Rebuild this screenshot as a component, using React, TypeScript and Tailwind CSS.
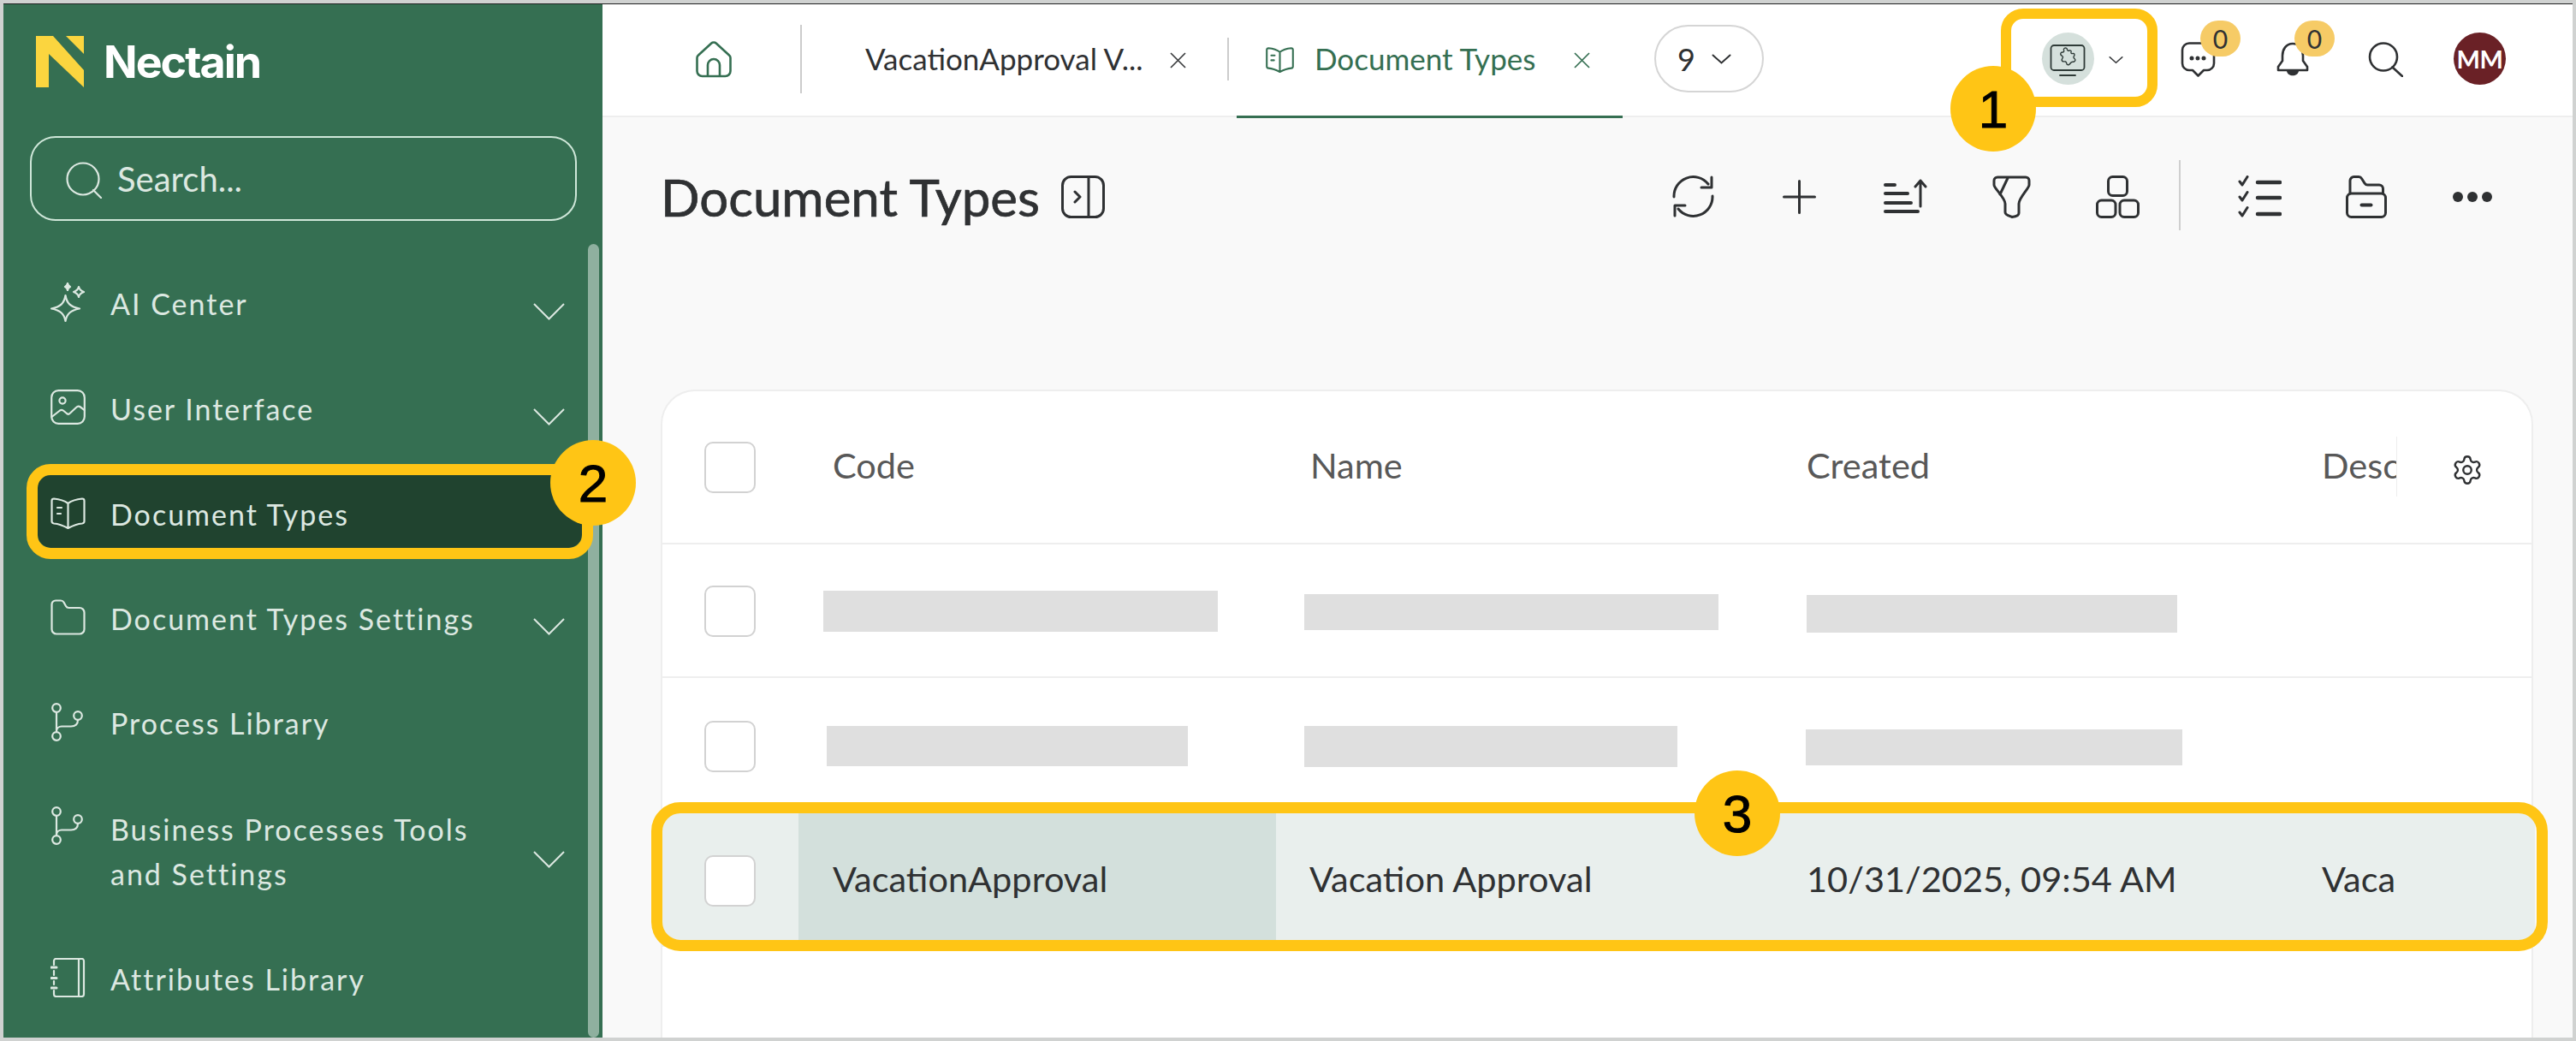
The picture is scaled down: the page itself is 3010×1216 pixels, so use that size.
import React from "react";
import { Settings } from "lucide-react";

const side = { fill: "none", stroke: "currentColor", strokeWidth: 2.2, strokeLinecap: "round", strokeLinejoin: "round" } as const;
const dark = { fill: "none", stroke: "currentColor", strokeWidth: 3, strokeLinecap: "round", strokeLinejoin: "round" } as const;

const Sparkle = () => (
  <svg width="41" height="46" viewBox="0 0 41 46" {...side}>
    <path d="M17.5 15C19 24 23 28.5 34 30.5C23 32.5 19 37 17.5 45C16 37 12 32.5 1 30.5C12 28.5 16 24 17.5 15Z" />
    <path d="M33 5C33.5 8 35 9.5 39 11C35 12.5 33.5 14 33 17C32.5 14 31 12.5 27 11C31 9.5 32.5 8 33 5Z" />
    <path d="M20 1C20.3 3 21 4 23 5C21 6 20.3 7 20 9C19.7 7 19 6 17 5C19 4 19.7 3 20 1Z" fill="currentColor" />
  </svg>
);
const ImageIcon = () => (
  <svg width="41" height="41" viewBox="0 0 41 41" {...side}>
    <rect x="1.2" y="1.2" width="38.6" height="38.6" rx="8" />
    <circle cx="14" cy="13" r="3.6" />
    <path d="M1.5 32L11 24.5C12.5 23.5 14 23.5 15.5 25L19 28C20.5 29 22 29 23 27.5L30 21C31.5 19.5 33 19 35 20.5L39.5 24" />
  </svg>
);
const Book = ({ w = 41, h = 37, sw = 2.2 }: { w?: number; h?: number; sw?: number }) => (
  <svg width={w} height={h} viewBox="0 0 41 37" {...side} strokeWidth={sw}>
    <path d="M20.5 7C15 3 9 2 4 1.5Q1.5 1.5 1.5 4V28Q1.5 30 4 30.5C10 31 15 33 20.5 36C26 33 31 31 37 30.5Q39.5 30 39.5 28V4Q39.5 1.5 37 1.5C32 2 26 3 20.5 7ZM20.5 7V36" />
    <path d="M8 12H13M8 19H12" />
  </svg>
);
const Folder = () => (
  <svg width="41" height="42" viewBox="0 0 41 42" {...side}>
    <path d="M6 1.5H12A4 4 0 0 1 15.5 3.5L18 8A4 4 0 0 0 21.5 10H34A5.5 5.5 0 0 1 39.5 15.5V35A5.5 5.5 0 0 1 34 40.5H7A5.5 5.5 0 0 1 1.5 35V6A4.5 4.5 0 0 1 6 1.5Z" />
  </svg>
);
const Branch = () => (
  <svg width="41" height="45" viewBox="0 0 41 45" {...side}>
    <circle cx="7" cy="6" r="4.8" />
    <circle cx="7" cy="39" r="4.8" />
    <circle cx="32" cy="15" r="4.8" />
    <path d="M7 11V34M32 20C32 25 29 27.5 24 27.5H13A6 6 0 0 0 7 33" />
  </svg>
);
const Notebook = () => (
  <svg width="41" height="46" viewBox="0 0 41 46" {...side}>
    <path d="M4 8V3.5A2.5 2.5 0 0 1 6.5 1H36.5A2.5 2.5 0 0 1 39 3.5V42.5A2.5 2.5 0 0 1 36.5 45H6.5A2.5 2.5 0 0 1 4 42.5V38" />
    <path d="M33 1V45M4 15V20M4 27V31" />
    <path d="M1 11H7M1 23.5H7M1 35H7" strokeWidth={3} />
  </svg>
);
const SideChevron = () => (
  <svg width="37" height="20" viewBox="0 0 37 20" fill="none" stroke="currentColor" strokeWidth="2">
    <path d="M1 1L18.5 18.5L36 1" />
  </svg>
);
const Close = ({ cls }: { cls: string }) => (
  <svg width="19" height="19" viewBox="0 0 19 19" fill="none" stroke="currentColor" strokeWidth="1.7" className={cls}>
    <path d="M1 1L18 18M18 1L1 18" />
  </svg>
);
const SmallChevron = ({ w, h, cls }: { w: number; h: number; cls: string }) => (
  <svg width={w} height={h} viewBox="0 0 23 12" fill="none" stroke="currentColor" strokeWidth="2" strokeLinecap="round" className={cls}>
    <path d="M1.5 1.5L11.5 10.5L21.5 1.5" />
  </svg>
);

const NavRow = ({ icon, label, chevron, active, tall }: { icon: React.ReactNode; label: React.ReactNode; chevron?: boolean; active?: boolean; tall?: boolean }) => (
  <div className={tall ? "h-[176px] flex items-center" : "h-[122.5px] flex items-center"}>
    <div
      className={
        active
          ? "ml-[40px] w-[636px] h-[86px] -mt-[6px] pt-[8px] pl-[15px] pr-[20px] flex items-center rounded-[16px] bg-[#20432f]"
          : "ml-[40px] w-[636px] pl-[15px] pr-[20px] flex items-center"
      }
    >
      <div className={tall ? "w-[41px] shrink-0 self-start -mt-[1px]" : "w-[41px] shrink-0 -mt-[4px]"}>{icon}</div>
      <div className="ml-[29px] text-[34px] leading-[52px] tracking-[2px]">{label}</div>
      {chevron && (
        <div className="ml-auto mt-[18px]">
          <SideChevron />
        </div>
      )}
    </div>
  </div>
);

const Checkbox = () => <div className="w-[60px] h-[60px] ml-[49px] mt-[1px] rounded-[10px] border-2 border-[#d2d2d2] bg-white" />;

const Yellow = ({ cls }: { cls: string }) => <div className={"absolute border-[#ffc515] " + cls} />;
const Num = ({ n, cls }: { n: string; cls: string }) => (
  <div className={"absolute w-[100px] h-[100px] rounded-full bg-[#ffc515] flex items-center justify-center text-black text-[62px] [-webkit-text-stroke:1px_black] [font-family:'Liberation_Sans',sans-serif] " + cls}>{n}</div>
);
const Zero = ({ cls }: { cls: string }) => (
  <div className={"absolute w-[47px] h-[42px] rounded-full bg-[#f6cb66] flex items-center justify-center text-[#2f3133] text-[30px] " + cls}>0</div>
);

export default function App() {
  const gridCls = "grid grid-cols-[159px_558px_582px_602px_125px_158px]";
  return (
    <div className="relative w-[3010px] h-[1216px] overflow-hidden bg-[#d0d2d1] pt-[4px] px-[4px] pb-[4px] [font-family:Lato,sans-serif]">
      <div className="flex h-full border-t border-[#222]">
        <aside className="relative w-[700px] shrink-0 overflow-hidden bg-[#356f52] text-[#dce8e1]">
          <div className="flex pl-[38px] pt-[37px] h-[97px]">
            <svg width="56" height="60" viewBox="0 0 56 60" fill="#fbd53f">
              <path d="M0 0H20L56 40V60L15 21V60H0Z" />
              <path d="M35 0H56V21Z" />
            </svg>
            <span className="ml-[23px] mt-[1px] text-white text-[52px] leading-[60px] font-bold tracking-[-2px] [font-family:Inter,sans-serif]">Nectain</span>
          </div>
          <div className="ml-[31px] mt-[57px] w-[639px] h-[99px] rounded-[30px] border-2 border-[#cfe7d9] flex items-center pl-[40px]">
            <svg width="43" height="43" viewBox="0 0 43 43" {...side} className="mt-[3px]">
              <circle cx="20" cy="20" r="18.5" />
              <path d="M32 33L41 42" />
            </svg>
            <span className="ml-[17px] text-[40px] leading-none">Search...</span>
          </div>
          <nav className="mt-[36px]">
            <NavRow icon={<Sparkle />} label="AI Center" chevron />
            <NavRow icon={<ImageIcon />} label="User Interface" chevron />
            <NavRow icon={<Book />} label="Document Types" active />
            <NavRow icon={<Folder />} label="Document Types Settings" chevron />
            <NavRow icon={<Branch />} label="Process Library" />
            <NavRow
              tall
              icon={<Branch />}
              label={
                <>
                  Business Processes Tools
                  <br />
                  and Settings
                </>
              }
              chevron
            />
            <NavRow icon={<Notebook />} label="Attributes Library" />
          </nav>
          <div className="absolute left-[683px] top-[280px] bottom-0 w-[13px] rounded-full bg-[#8fb09f]" />
        </aside>

        <main className="flex-1 flex flex-col min-w-0 bg-[#f9f9f9]">
          <header className="h-[132px] shrink-0 bg-white border-b-2 border-[#eeeeee] flex items-stretch text-[#2f3133]">
            <div className="w-[231px] pl-[109px] flex items-center text-[#356f52]">
              <svg width="42" height="43" viewBox="0 0 42 43" fill="none" stroke="currentColor" strokeWidth="2.6" strokeLinejoin="round" className="-mt-[2px]">
                <path d="M1.5 19.5A4 4 0 0 1 3 16.5L18 2.7A4.5 4.5 0 0 1 24 2.7L39 16.5A4 4 0 0 1 40.5 19.5V35A6 6 0 0 1 34.5 41H7.5A6 6 0 0 1 1.5 35Z" />
                <path d="M14 41V28A7 7 0 0 1 28 28V41" />
              </svg>
            </div>
            <div className="self-center w-[2px] h-[80px] -mt-[2px] bg-[#cccccc]" />
            <div className="flex items-center pl-[74px] w-[497px]">
              <span className="-mt-[3px] text-[35px] leading-none whitespace-nowrap">VacationApproval V...</span>
              <Close cls="ml-[31px] shrink-0 text-[#3b3d3f]" />
            </div>
            <div className="self-center w-[2px] h-[50px] -mt-[2px] bg-[#cccccc]" />
            <div className="ml-[9px] w-[451px] h-[133px] flex items-center pl-[34px] border-b-[3px] border-[#356f52] text-[#356f52]">
              <Book w={33} h={30} sw={2.6} />
              <span className="-mt-[3px] ml-[24px] text-[35px] leading-none whitespace-nowrap">Document Types</span>
              <Close cls="ml-[45px] shrink-0" />
            </div>
            <div className="ml-[37px] self-center -mt-[3px] w-[128px] h-[79px] rounded-full border-2 border-[#d5d5d5] flex items-center pl-[25px]">
              <span className="text-[36px] leading-none">9</span>
              <SmallChevron w={23} h={12} cls="ml-[19px]" />
            </div>
            <div className="ml-[325px] self-center w-[61px] h-[61px] -mt-[3px] rounded-full bg-[#d5e0dc] text-[#2f3b38]">
              <svg width="61" height="61" viewBox="0 0 61 61" fill="none" stroke="currentColor" strokeWidth="1.8" strokeLinecap="round" strokeLinejoin="round">
                <rect x="10.5" y="15" width="39" height="29" rx="3.5" />
                <path d="M21 50H39" />
                <path strokeWidth="1.4" d="M26 18.5C27.5 17.5 29.5 18 29.5 20C29.5 21 31 21.5 32 21C33.5 20.5 34.5 21.5 34 23C33.5 24 34.5 25 36 24.5C38 24 38.5 26 37.5 27.5C36.5 28.5 37 30 38 30.5C39.5 31.5 39 33.5 37.5 34C36 34.5 34.5 34 33.5 35.5C32.5 37 31 38.5 29.5 37.5C28.5 36.5 29 34.5 27.5 34C26 33.5 24.5 34.5 23.5 33C22.5 31.5 24 30 24.5 29C25 27.5 23 27.5 22 26C21 24.5 22.5 23 24 23C25.5 23 26 22 25.5 20.5C25.2 19.5 25.2 19 26 18.5Z" />
              </svg>
            </div>
            <SmallChevron w={17} h={10} cls="self-center ml-[17px] -mt-[1px] text-[#3b3d3f]" />
            <div className="relative self-center ml-[67px] w-[41px] h-[41px] -mt-[1px]">
              <svg width="41" height="41" viewBox="0 0 41 41" fill="none" stroke="currentColor" strokeWidth="2.6" strokeLinejoin="round">
                <path d="M10 1.5H31A8 8 0 0 1 39 9.5V25A8 8 0 0 1 31 33H27L20.5 39.5L14 33H10A8 8 0 0 1 2 25V9.5A8 8 0 0 1 10 1.5Z" />
                <circle cx="13" cy="19" r="1.2" fill="currentColor" />
                <circle cx="20" cy="19" r="1.2" fill="currentColor" />
                <circle cx="27" cy="19" r="1.2" fill="currentColor" />
              </svg>
              <Zero cls="left-[23px] -top-[25px]" />
            </div>
            <div className="relative self-center ml-[71px] w-[38px] h-[41px] -mt-[1px]">
              <svg width="38" height="41" viewBox="0 0 38 41" fill="none" stroke="currentColor" strokeWidth="2.6" strokeLinejoin="round">
                <path d="M19 2C11 2 7 9 7 16V22L2 29V33H36V29L31 22V16C31 9 27 2 19 2Z" />
                <path d="M12 34H26C25 41 13 41 12 34Z" fill="currentColor" stroke="none" />
              </svg>
              <Zero cls="left-[21px] -top-[25px]" />
            </div>
            <div className="self-center ml-[69px] -mt-[1px]">
              <svg width="41" height="41" viewBox="0 0 41 41" fill="none" stroke="currentColor" strokeWidth="2.6" strokeLinecap="round">
                <circle cx="18" cy="17.5" r="16" />
                <path d="M28.5 29.5L40 40" />
              </svg>
            </div>
            <div className="self-center ml-[59px] -mt-[3px] w-[61px] h-[61px] rounded-full bg-[#6a2126] text-white text-[29px] font-bold tracking-[-0.5px] flex items-center justify-center">MM</div>
          </header>

          <div className="mt-[50px] h-[82px] shrink-0 flex items-center pl-[68px] pt-[3px] text-[#2f3133]">
            <h1 className="text-[60px] leading-none font-normal whitespace-nowrap [-webkit-text-stroke:0.7px_#2f3133]">Document Types</h1>
            <svg width="51" height="50" viewBox="0 0 51 50" {...dark} className="ml-[25px]">
              <rect x="1.5" y="1.5" width="48" height="47" rx="10" />
              <path d="M32 1.5V48.5M16 19L22 25L16 31" />
            </svg>
            <svg width="51" height="51" viewBox="0 0 51 51" {...dark} className="ml-[662px]">
              <path d="M3 26A22.5 22.5 0 0 1 43 11" />
              <path d="M47 3V15H35" />
              <path d="M48 25A22.5 22.5 0 0 1 8 40" />
              <path d="M4 48V36H16" />
            </svg>
            <svg width="39" height="40" viewBox="0 0 39 40" {...dark} className="ml-[79px]">
              <path d="M19.5 1.5V38.5M1.5 20H37.5" />
            </svg>
            <svg width="51" height="41" viewBox="0 0 51 41" {...dark} className="ml-[79px]">
              <path d="M2 7H13M2 17H28M2 28H32M2 38H40" strokeWidth={4} />
              <path d="M43 32V2M37 9L43 2L49 9" />
            </svg>
            <svg width="45" height="50" viewBox="0 0 45 50" {...dark} className="ml-[76px]">
              <path d="M6 2H39A4 4 0 0 1 43 6V11C43 15 31 26 31 33V44C31 47 27 48 23 48.5C19 47 15 46 15 43V33C15 26 2 15 2 11V6A4 4 0 0 1 6 2Z" />
              <path d="M18 3L9 22" />
            </svg>
            <svg width="51" height="50" viewBox="0 0 51 50" {...dark} className="ml-[76px]">
              <rect x="14.5" y="1.5" width="22" height="22" rx="5" />
              <rect x="1.5" y="29" width="21.5" height="19.5" rx="5" />
              <rect x="28" y="29" width="21.5" height="19.5" rx="5" />
            </svg>
            <div className="ml-[46px] -mt-[3px] w-[2px] h-[82px] bg-[#cfcfcf]" />
            <svg width="51" height="50" viewBox="0 0 51 50" {...dark} className="ml-[67px]">
              <path d="M2 7L5 11L11 1.5M2 25L5 29L11 19.5M2 43L5 47L11 37.5" />
              <path d="M23 8H49M23 26H49M23 45H49" strokeWidth={4.5} />
            </svg>
            <svg width="48" height="50" viewBox="0 0 48 50" {...dark} className="ml-[75px]">
              <path d="M5 21V6A4.5 4.5 0 0 1 9.5 1.5H15A4 4 0 0 1 18.5 3.5L22 9A4 4 0 0 0 25.5 11H39A4.5 4.5 0 0 1 43.5 15.5V21" />
              <rect x="1.5" y="21" width="45" height="27.5" rx="5" />
              <path d="M18.5 34.5H29.5" strokeWidth={4} />
            </svg>
            <svg width="46" height="14" viewBox="0 0 46 14" fill="currentColor" className="ml-[77px]">
              <circle cx="6" cy="7" r="6" />
              <circle cx="23" cy="7" r="6" />
              <circle cx="40" cy="7" r="6" />
            </svg>
          </div>

          <section className="ml-[68px] mt-[186px] w-[2188px] flex-1 rounded-t-[40px] border-x-2 border-t-2 border-[#eeeeee] bg-white text-[#2f3133]">
            <div className={gridCls + " h-[179px] border-b-2 border-[#eeeeee] text-[#585858]"}>
              <div className="flex items-center"><Checkbox /></div>
              <div className="flex items-center pl-[40px] pb-[4px] text-[41.5px]">Code</div>
              <div className="flex items-center pl-[40px] pb-[4px] text-[41.5px]">Name</div>
              <div className="flex items-center pl-[38px] pb-[4px] text-[41.5px]">Created</div>
              <div className="flex items-center pl-[38px] pb-[4px] text-[41.5px] overflow-hidden whitespace-nowrap">Description</div>
              <div className="relative flex items-center pl-[64px]">
                <div className="absolute left-0 top-[53px] h-[70px] w-px bg-[#eeeeee]" />
                <Settings size={38} strokeWidth={1.5} className="mt-[6px] text-[#2f3133]" />
              </div>
            </div>
            <div className={gridCls + " h-[156px] border-b-2 border-[#eeeeee]"}>
              <div className="flex items-center"><Checkbox /></div>
              <div className="flex items-center"><div className="ml-[29px] mt-[2px] w-[461px] h-[48px] bg-[#dfdfdf]" /></div>
              <div className="flex items-center"><div className="ml-[33px] mt-[4px] w-[484px] h-[42px] bg-[#dfdfdf]" /></div>
              <div className="flex items-center"><div className="ml-[38px] mt-[8px] w-[433px] h-[44px] bg-[#dfdfdf]" /></div>
            </div>
            <div className={gridCls + " h-[158px]"}>
              <div className="flex items-center"><Checkbox /></div>
              <div className="flex items-center"><div className="ml-[33px] w-[422px] h-[47px] bg-[#dfdfdf]" /></div>
              <div className="flex items-center"><div className="ml-[33px] -mb-[1px] w-[436px] h-[48px] bg-[#dfdfdf]" /></div>
              <div className="flex items-center"><div className="ml-[37px] -mb-[3px] w-[440px] h-[42px] bg-[#dfdfdf]" /></div>
            </div>
            <div className={gridCls + " h-[156px] w-[2188px] bg-[#e9efed] text-[41.5px]"}>
              <div className="flex items-center"><Checkbox /></div>
              <div className="flex items-center pl-[40px] pb-[4px] bg-[#d3e0dc]">VacationApproval</div>
              <div className="flex items-center pl-[39px] pb-[4px]">Vacation Approval</div>
              <div className="flex items-center pl-[38px] pb-[4px]">10/31/2025, 09:54 AM</div>
              <div className="flex items-center pl-[38px] pb-[4px] overflow-hidden whitespace-nowrap">Vaca</div>
            </div>
          </section>
        </main>
      </div>

      <Yellow cls="left-[2338px] top-[10px] w-[183px] h-[115px] border-[12px] rounded-[26px]" />
      <Num n="1" cls="left-[2279px] top-[77px]" />
      <Yellow cls="left-[31px] top-[542px] w-[662px] h-[111px] border-[13px] rounded-[28px]" />
      <Num n="2" cls="left-[643px] top-[514px]" />
      <Yellow cls="left-[761px] top-[937px] w-[2216px] h-[174px] border-[13px] rounded-[34px]" />
      <Num n="3" cls="left-[1980px] top-[900px]" />
    </div>
  );
}
